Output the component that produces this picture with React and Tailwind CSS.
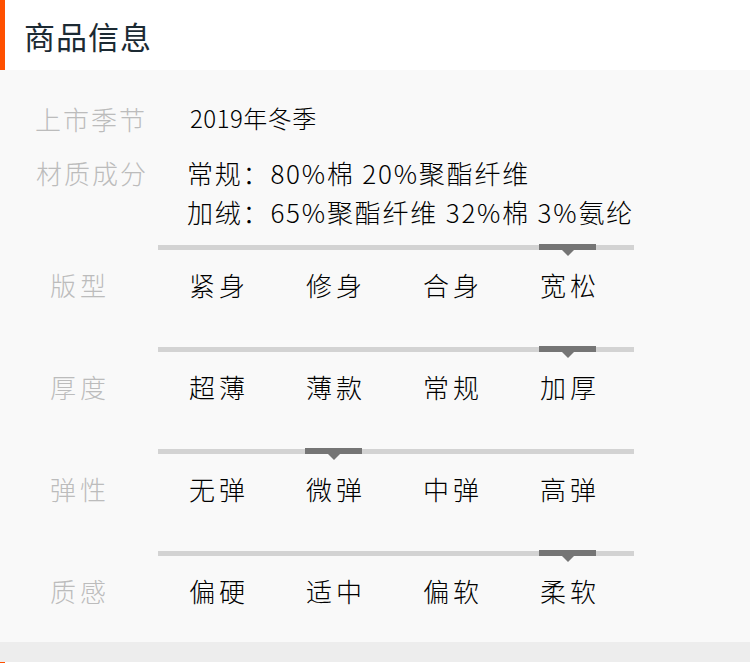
import React from 'react'

const font = { fontFamily: '"Noto Sans CJK SC", "Noto Sans", sans-serif' }

const sliders = [
  { label: '版型', options: ['紧身', '修身', '合身', '宽松'], active: 3 },
  { label: '厚度', options: ['超薄', '薄款', '常规', '加厚'], active: 3 },
  { label: '弹性', options: ['无弹', '微弹', '中弹', '高弹'], active: 1 },
  { label: '质感', options: ['偏硬', '适中', '偏软', '柔软'], active: 3 },
]

function SliderBlock({ item, first }) {
  return (
    <div className={first ? 'mt-[14px]' : 'mt-[43px]'}>
      {/* track with selected segment */}
      <div className="ml-[158px] w-[476px] h-[5px] bg-[#d3d3d3] flex pl-[30px]">
        {item.options.map((o, i) => (
          <div key={o} className="w-[117px] shrink-0">
            {i === item.active && (
              <div className="relative w-[57px] h-[6px] -mt-[1px] bg-[#757575]">
                <div className="absolute left-1/2 top-full -translate-x-1/2 w-0 h-0 border-l-[6px] border-r-[6px] border-t-[6px] border-l-transparent border-r-transparent border-t-[#757575]" />
              </div>
            )}
          </div>
        ))}
      </div>

      <div className="mt-[14px] flex h-[40px] items-center">
        <div className="w-[158px] shrink-0 pl-[50px] text-[26px] tracking-[4px] text-[#bcbcbc]">
          {item.label}
        </div>
        <div className="flex pl-[31px]">
          {item.options.map((o) => (
            <div key={o} className="w-[117px] shrink-0 text-[26px] tracking-[4px] text-black">
              {o}
            </div>
          ))}
        </div>
      </div>
    </div>
  )
}

export default function App() {
  return (
    <div className="w-[750px] h-[663px] overflow-hidden bg-[#ededed]" style={font}>
      {/* header */}
      <div className="h-[70px] bg-white border-l-[5px] border-[#ff5000] flex items-center pl-[19px]">
        <h2 className="text-[31px] leading-none tracking-[1px] text-[#1c2a33]">商品信息</h2>
      </div>

      {/* details */}
      <div className="h-[572px] bg-[#f9f9f9] pt-[28px] font-light">
        <div className="flex h-[40px] items-center">
          <div className="w-[155px] shrink-0 pl-[35px] text-[26px] tracking-[2px] text-[#bcbcbc]">上市季节</div>
          <div className="pl-[35px] text-[24px] tracking-[0.5px] text-black">2019年冬季</div>
        </div>

        <div className="mt-[15px] flex">
          <div className="w-[155px] shrink-0 pl-[36px] text-[26px] leading-[39px] tracking-[2px] text-[#bcbcbc]">材质成分</div>
          <div className="pl-[32px] text-[26px] leading-[39px] tracking-[1.8px] text-black">
            <div>常规：80%棉 20%聚酯纤维</div>
            <div>加绒：65%聚酯纤维 32%棉 3%氨纶</div>
          </div>
        </div>

        {sliders.map((s, i) => (
          <SliderBlock key={s.label} item={s} first={i === 0} />
        ))}
      </div>

      {/* next section begins */}
      <div className="mt-[20px] h-[20px] bg-white border-l-[5px] border-[#ff5000]" />
    </div>
  )
}
